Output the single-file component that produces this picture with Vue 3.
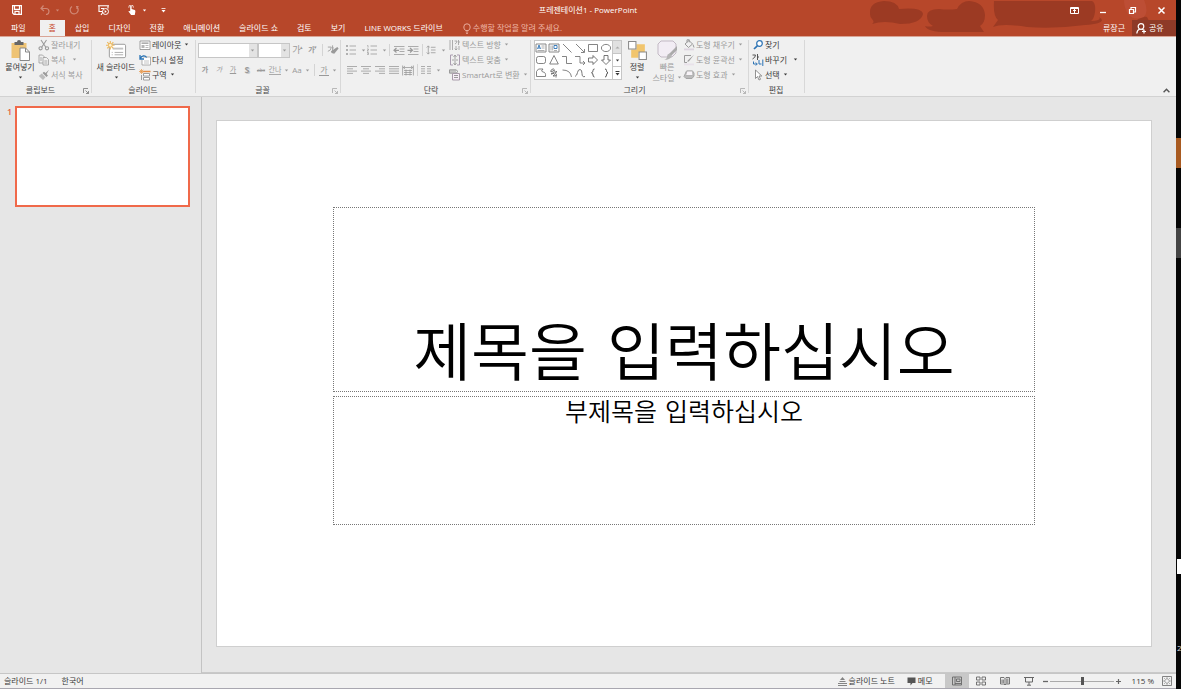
<script setup>
import { ref } from 'vue'

const zoom = ref(52)
const tabsAfterHome = ['삽입', '디자인', '전환', '애니메이션', '슬라이드 쇼', '검토', '보기', 'LINE WORKS 드라이브']
const clipboardItems = [
  { label: '잘라내기', icon: 'cut', off: true },
  { label: '복사', icon: 'copy', off: true, arrow: true, wide: true },
  { label: '서식 복사', icon: 'painter', off: true },
]
const slideItems = [
  { label: '레이아웃', icon: 'layout', arrow: true },
  { label: '다시 설정', icon: 'reset' },
  { label: '구역', icon: 'section', arrow: true },
]
const textItems = [
  { label: '텍스트 방향', icon: 'textdir' },
  { label: '텍스트 맞춤', icon: 'textalign' },
  { label: 'SmartArt로 변환', icon: 'smartart' },
]
const shapeItems = [
  { label: '도형 채우기', icon: 'fill' },
  { label: '도형 윤곽선', icon: 'outline' },
  { label: '도형 효과', icon: 'effect' },
]
const editItems = [
  { label: '찾기', icon: 'find' },
  { label: '바꾸기', icon: 'replace', arrow: true, wide: true },
  { label: '선택', icon: 'select', arrow: true },
]
const shapes = ['s-text', 's-vtext', 's-line', 's-arrow', 's-rect', 's-oval', 's-round', 's-tri', 's-elbow', 's-elbowarrow', 's-right', 's-down', 's-free', 's-scribble', 's-arc', 's-curve', 's-lbrace', 's-rbrace']
const views = [
  { icon: 'v-normal', label: '기본', on: true },
  { icon: 'v-sorter', label: '여러 슬라이드' },
  { icon: 'v-read', label: '읽기용 보기' },
  { icon: 'v-show', label: '슬라이드 쇼 시작' },
]
</script>

<template>
  <div class="desktop">
    <svg class="defs" aria-hidden="true">
      <symbol id="arr" viewBox="0 0 5 3"><path d="M.8.5h3.400L2.500 2.500z" fill="currentColor" /></symbol>
      <symbol id="launch" viewBox="0 0 6 6"><path d="M.5 5V.5H5M2.500 2.500l3 3M5.500 3v2.500H3" fill="none" stroke="currentColor" stroke-width=".8" /></symbol>
      <symbol id="cut" viewBox="0 0 12 12"><g fill="none" stroke="currentColor" stroke-width="1.100"><path d="M3 1l5 7.500M8.500 1L3.500 8.500" /><circle cx="2.600" cy="9.300" r="1.600" /><circle cx="9" cy="9.300" r="1.600" /></g></symbol>
      <symbol id="copy" viewBox="0 0 12 12"><g fill="#f0f0f0" stroke="currentColor" stroke-width=".8"><path d="M1 1h3.500L6.500 3v6H1z" /><path d="M5 3.500h3.500l2 2V11H5z" /><path d="M6.300 7h3M6.300 9h3M2 4h2M2 6h2" /></g></symbol>
      <symbol id="painter" viewBox="0 0 12 12"><path d="M11 .7L7.500 4 6 2.700 4.500 4l4 4L10 6.500 8.600 5z" fill="currentColor" /><path d="M3.800 4.500l3.700 3.700L5 11 .8 7z" fill="currentColor" opacity=".6" /></symbol>
      <symbol id="paste" viewBox="0 0 20 21"><path d="M1 3h15v15H1z" fill="#eec374" /><path d="M4 2h2.500a2 2 0 0 1 4 0H13v3H4z" fill="#666" /><path d="M9.500 8h5.500l4 4v8.500H9.500z" fill="#fff" stroke="#888" /><path d="M15 8v4h4" fill="none" stroke="#888" /></symbol>
      <symbol id="newslide" viewBox="0 0 22 20"><rect x="3.500" y="3.500" width="17" height="14" rx="1.500" fill="#fff" stroke="#999" /><path d="M7 7h11v2H7z" fill="#c4c4c4" /><path d="M6 12h1M9 12h9M6 14.500h1M9 14.500h9" stroke="#aaa" /><path d="M4.500 0v9M0 4.500h9M1.300 1.300l6.400 6.400M7.700 1.300L1.300 7.700" stroke="#edb95e" stroke-width="1.200" /><circle cx="4.500" cy="4.500" r="2" fill="#fff0cf" stroke="#edb95e" /></symbol>
      <symbol id="layout" viewBox="0 0 12 12"><path d="M1 2h10v8.500H1z" fill="#fff" stroke="#8a8a8a" stroke-width=".8" /><path d="M2.500 3.500h7v1.300h-7z" fill="#999" /><path d="M2.500 6h3v3h-3z" fill="#b5b5b5" /><path d="M6.500 6.500h3M6.500 8.500h3" stroke="#aaa" stroke-width=".8" /></symbol>
      <symbol id="reset" viewBox="0 0 12 12"><path d="M4 3h7.500v8H3V6" fill="#fff" stroke="#999" stroke-width=".8" /><path d="M5 7h5M5 9h5" stroke="#c4c4c4" /><path d="M1 1v4h4M1.300 4.500C2.500 1.500 6 .8 7.600 3.500" fill="none" stroke="#2672b5" stroke-width="1.300" /></symbol>
      <symbol id="section" viewBox="0 0 12 12"><path d="M4.500 4.500h6v2.500h-6zM4.500 8.500h6v2.500h-6z" fill="#fff" stroke="#888" stroke-width=".8" /><path d="M4 2.500h7.500" stroke="#e58c43" stroke-width="1.500" /><path d="M2.500 0v5M0 2.500h5M.8.8l3.400 3.400M4.200.8L.8 4.200" stroke="#e79a4f" stroke-width=".8" /><path d="M2.500 6v5" stroke="#888" stroke-width=".8" /></symbol>
      <symbol id="clearfmt" viewBox="0 0 14 12"><path d="M12 2l1.500 1.800-5 6-3.200-.8L4.600 7z" fill="currentColor" /><path d="M1 2h4q0 4-4 5M6.500 0v7M6.500 3H8" fill="none" stroke="currentColor" /></symbol>
      <symbol id="bullets" viewBox="0 0 10 10"><path d="M0 1h2M0 5h2M0 9h2" stroke="currentColor" stroke-width="1.600" /><path d="M3.500 1H10M3.500 5H10M3.500 9H10" stroke="currentColor" stroke-width=".8" /></symbol>
      <symbol id="numbers" viewBox="0 0 10 10"><path d="M.3.500H1v2M0 4h1.400v1L0 6h1.600M0 7.500h1.400v2.200H0M.5 8.600h.9" fill="none" stroke="currentColor" stroke-width=".7" /><path d="M3.500 1H10M3.500 5H10M3.500 9H10" stroke="currentColor" stroke-width=".8" /></symbol>
      <symbol id="outdent" viewBox="0 0 12 10"><path d="M1 1h10.500M6.500 3.500h5M6.500 6h5M1 9h10.500" stroke="currentColor" stroke-width=".8" /><path d="M6 4.800H1.500M3.500 2.500L1 4.800 3.500 7" fill="none" stroke="currentColor" stroke-width="1.200" /></symbol>
      <symbol id="indent" viewBox="0 0 12 10"><path d="M1 1h10.500M6.500 3.500h5M6.500 6h5M1 9h10.500" stroke="currentColor" stroke-width=".8" /><path d="M.5 4.800H5M3 2.500l2.500 2.300L3 7" fill="none" stroke="currentColor" stroke-width="1.200" /></symbol>
      <symbol id="spacing" viewBox="0 0 10 11"><path d="M2 1v9M.3 2.800L2 1l1.700 1.800M.3 8.200L2 10l1.700-1.800M5 2.500h5M5 5.500h5M5 8.500h5" fill="none" stroke="currentColor" stroke-width=".9" /></symbol>
      <symbol id="al" viewBox="0 0 10 8"><path d="M0 .5h10M0 2.800h6M0 5.100h10M0 7.400h6" stroke="currentColor" stroke-width=".8" /></symbol>
      <symbol id="ac" viewBox="0 0 10 8"><path d="M0 .5h10M2 2.800h6M0 5.100h10M2 7.400h6" stroke="currentColor" stroke-width=".8" /></symbol>
      <symbol id="ar" viewBox="0 0 10 8"><path d="M0 .5h10M4 2.800h6M0 5.100h10M4 7.400h6" stroke="currentColor" stroke-width=".8" /></symbol>
      <symbol id="aj" viewBox="0 0 10 8"><path d="M0 .5h10M0 2.800h10M0 5.100h10M0 7.400h10" stroke="currentColor" stroke-width=".8" /></symbol>
      <symbol id="ad" viewBox="0 0 12 10"><path d="M.6 0v10M11.400 0v10M1 2h10M3 .5L1.200 2 3 3.500M9 .5L10.800 2 9 3.500M2 5h8M2 7h8M2 9h8M4 4v6M8 4v6" fill="none" stroke="currentColor" stroke-width=".8" /></symbol>
      <symbol id="cols" viewBox="0 0 10 8"><path d="M0 .5h4M0 2.800h4M0 5.100h4M0 7.400h4M6 .5h4M6 2.800h4M6 5.100h4M6 7.400h4" stroke="currentColor" stroke-width=".8" /></symbol>
      <symbol id="textdir" viewBox="0 0 12 12"><path d="M1 1v10M3.500 1v10M5.500 2H8q0 2-2 3M9.500 1v5M9.500 3H11M7 7v4M10 7v4M5.700 9.500L7 11l1.300-1.500" fill="none" stroke="currentColor" stroke-width=".8" /></symbol>
      <symbol id="textalign" viewBox="0 0 12 12"><path d="M4 1H1.500v10H4M8 1h2.500v10H8" fill="none" stroke="#ab9db1" /><path d="M6 1v4M6 7v4M4.500 3L6 1l1.500 2M4.500 9L6 11l1.500-2M3 6h6" fill="none" stroke="currentColor" stroke-width=".9" /></symbol>
      <symbol id="smartart" viewBox="0 0 12 12"><path d="M.5.800h6.500l2 1.700-2 1.700H.5z" fill="none" stroke="currentColor" /><path d="M1 1h6v3H1z" fill="currentColor" opacity=".5" /><path d="M3.500 4.500h7v6.500h-7z" fill="#f7eef7" stroke="#a89ba9" /><path d="M5 6.500h4M5 8.500h4" stroke="currentColor" /></symbol>
      <symbol id="arrange" viewBox="0 0 20 20"><path d="M9 4h8v8H9zM4 9h7v8H4z" fill="#f1c56d" /><path d="M1.500 1.500h7v7h-7zM11.500 11.500h7v7h-7z" fill="#fff" stroke="#8a8a8a" /></symbol>
      <symbol id="quick" viewBox="0 0 21 21"><path d="M4 1h12l3 3v9l-4 4H4l-3-3V4z" fill="#f2edf4" stroke="#c2b9c4" /><path d="M20 6v4l-6 6-2-2z" fill="#aaa" /><path d="M12.500 13.500l2.500 2.500q-2 4-8 4 3-1 3-3.500 0-2.500 2.500-3z" fill="#b5b5b5" /></symbol>
      <symbol id="fill" viewBox="0 0 12 12"><path d="M2 5l4-3.500L9.500 5 5.500 8.500zM4 3.500V.8h2.300v2.500M10 5.500l1 3" fill="none" stroke="currentColor" /><path d="M1 9.500h10v1.800H1z" fill="#ddd4df" /></symbol>
      <symbol id="outline" viewBox="0 0 12 12"><path d="M8 1.500H1.500v7H4" fill="none" stroke="currentColor" /><path d="M11 .7L6 7.200l-1.500.8.2-1.600z" fill="currentColor" /><path d="M1 9.500h10v1.800H1z" fill="#e9e2ea" /></symbol>
      <symbol id="effect" viewBox="0 0 12 12"><path d="M3.500 2h6l1.500 2v3L9 9.500H3L1 7.500z" fill="#bbb" stroke="#a5a5a5" /><path d="M4 2h5.500L10 6.500H2.500z" fill="#f7f3f7" stroke="#b5b5b5" /></symbol>
      <symbol id="find" viewBox="0 0 12 12"><circle cx="7.500" cy="4.500" r="2.800" fill="#fff" stroke="#2c73b4" stroke-width="1.200" /><path d="M5.300 6.800L2 10" stroke="#2c73b4" stroke-width="1.700" /></symbol>
      <symbol id="replace" viewBox="0 0 12 12"><path d="M.5 1h3q0 2.500-3 4M5.500 0v6M5.500 3H7" fill="none" stroke="#555" /><path d="M7 6v4h2.500M10.800 5.500V12M1.500 7.500V10h3.500M3.800 8.500L5.300 10 3.800 11.500" fill="none" stroke="#2c73b4" /></symbol>
      <symbol id="select" viewBox="0 0 12 12"><path d="M3.500 1v8.500l2-2 1.500 3.500 1.500-.7L7 7h2.800z" fill="#fff" stroke="#777" stroke-width=".8" /></symbol>
      <symbol id="s-text" viewBox="0 0 12 12"><path d="M1 2h10v8H1z" fill="#fff" stroke="#888" /><path d="M2.500 7l1.500-4 1.500 4M3 6h2" fill="none" stroke="#2c73b4" stroke-width=".9" /><path d="M6.500 4h3M6.500 6h3M2.500 8.500h7" stroke="#999" stroke-width=".8" /></symbol>
      <symbol id="s-vtext" viewBox="0 0 12 12"><path d="M1 2h10v8H1z" fill="#fff" stroke="#888" /><path d="M6 3.500h3v3H6z" fill="none" stroke="#2c73b4" stroke-width=".9" /><path d="M3 3.500v5M4.700 3.500v5M6 8.500h3" stroke="#999" stroke-width=".8" /></symbol>
      <symbol id="s-line" viewBox="0 0 12 12"><path d="M2 2l8.500 8.500" stroke="#666" stroke-width=".8" /></symbol>
      <symbol id="s-arrow" viewBox="0 0 12 12"><path d="M2 2l8 8M10.500 7v3.500H7" fill="none" stroke="#666" stroke-width=".8" /></symbol>
      <symbol id="s-rect" viewBox="0 0 12 12"><path d="M1.500 2.500h9v7h-9z" fill="none" stroke="#666" stroke-width=".8" /></symbol>
      <symbol id="s-oval" viewBox="0 0 12 12"><ellipse cx="6" cy="6" rx="4.600" ry="3.600" fill="none" stroke="#666" stroke-width=".8" /></symbol>
      <symbol id="s-round" viewBox="0 0 12 12"><rect x="1.500" y="2.500" width="9" height="7" rx="2" fill="none" stroke="#666" stroke-width=".8" /></symbol>
      <symbol id="s-tri" viewBox="0 0 12 12"><path d="M6 1.500l4.300 8.500H1.700z" fill="none" stroke="#666" stroke-width=".8" /></symbol>
      <symbol id="s-elbow" viewBox="0 0 12 12"><path d="M1 2.500h4.500v7H11" fill="none" stroke="#666" stroke-width=".8" /></symbol>
      <symbol id="s-elbowarrow" viewBox="0 0 12 12"><path d="M1 2.500h5v6.500h4.500M9 7l2 2-2 2" fill="none" stroke="#666" stroke-width=".8" /></symbol>
      <symbol id="s-right" viewBox="0 0 12 12"><path d="M1.500 4h4.500V1.500L10.500 6 6 10.500V8H1.500z" fill="none" stroke="#555" stroke-width=".8" /></symbol>
      <symbol id="s-down" viewBox="0 0 12 12"><path d="M4 1.500h4V6h2.500L6 10.500 1.500 6H4z" fill="none" stroke="#555" stroke-width=".8" /></symbol>
      <symbol id="s-free" viewBox="0 0 12 12"><path d="M3.500 2H8q-3 2.500 0 3 3 0 2.500 4.500h-9V4.500z" fill="none" stroke="#666" stroke-width=".8" /></symbol>
      <symbol id="s-scribble" viewBox="0 0 12 12"><path d="M5.500 1.500q-4 2-2.500 3.500 3-1 3-2.500 2 2-3 4.500 4 0 5.500-3 0 3-3.500 5 3 .5 3.500-1.500-.5 2-.5 3" fill="none" stroke="#666" stroke-width=".9" /></symbol>
      <symbol id="s-arc" viewBox="0 0 12 12"><path d="M1.500 3q8 0 9 7" fill="none" stroke="#666" stroke-width=".8" /></symbol>
      <symbol id="s-curve" viewBox="0 0 12 12"><path d="M1 9.500q2-1 2.500-4t2.500-3 2 4 3 3" fill="none" stroke="#666" stroke-width=".9" /></symbol>
      <symbol id="s-lbrace" viewBox="0 0 12 12"><path d="M7.500 2Q6 2 6 3.500T4.500 6Q6 6 6 8t1.500 2" fill="none" stroke="#555" /></symbol>
      <symbol id="s-rbrace" viewBox="0 0 12 12"><path d="M5 2q1.500 0 1.500 1.500T8 6Q6.500 6 6.500 8T5 10" fill="none" stroke="#555" /></symbol>
      <symbol id="v-normal" viewBox="0 0 10 10"><path d="M.5 1h9v8h-9zM3 1v8M4.500 3h3.500v2.500H4.500zM3 7.500h6" fill="none" stroke="currentColor" stroke-width=".9" /></symbol>
      <symbol id="v-sorter" viewBox="0 0 10 10"><path d="M.5 1h3.500v3H.5zM6 1h3.500v3H6zM.5 6h3.500v3H.5zM6 6h3.500v3H6z" fill="none" stroke="currentColor" stroke-width=".9" /></symbol>
      <symbol id="v-read" viewBox="0 0 10 10"><path d="M.5 1.500H4L5 2.500 6 1.500h3.500V8H6L5 9 4 8H.5zM5 2.500V9M2 3.500v3.500M3.300 3.500v3.500" fill="none" stroke="currentColor" stroke-width=".9" /><path d="M6 2.500h2.500v5H6z" fill="currentColor" opacity=".6" /></symbol>
      <symbol id="v-show" viewBox="0 0 10 10"><path d="M0 1.500h10M1.500 2v4h7V2M5 6v3M3 9.200h4" fill="none" stroke="currentColor" /></symbol>
      <symbol id="fit" viewBox="0 0 10 10"><path d="M.5.500h9v9h-9z" fill="none" stroke="currentColor" stroke-width=".8" /><path d="M5 1.500v2M5 6.500v2M1.500 5h2M6.500 5h2M2.500 2.500l1 1M7.500 2.500l-1 1M2.500 7.500l1-1M7.500 7.500l-1-1" stroke="currentColor" stroke-width=".9" /></symbol>
    </svg>

    <div class="window">
      <header class="top">
        <svg class="texture" viewBox="0 0 320 36" aria-hidden="true">
          <g fill="#9c3a23">
            <path d="M14 14Q13 2 28 1q13 0 15 8 23-2 24 5-2 10-23 10-16-4-28 0 3-2 0-5-2-2-2-5z" />
            <path d="M71 16q0-7 12-7 10 1 18 0 4-8 12-8 15 1 16 14 0 8-5 11l4 6H90q-18 0-21-6 4 1 8 0-6-3-6-10z" />
            <path d="M138 1h98q4 2 3 11-1 7-4 9 11 0 8-4 10 6-14 8-30 4-58 2-25-4-34 0l5-7q-5-4-4-19z" />
            <path d="M281 20q5-5 10-3l3 6h-16z" />
          </g>
          <path d="M268 0h20q5 11 0 17-10 4-15-2-5-6-5-15z" fill="#bd4e35" />
        </svg>
        <div class="titlebar">
          <div class="quickbar">
            <button aria-label="저장"><svg class="i10" viewBox="0 0 10 10"><path d="M.6.600h8.800v8.800H2L.6 8zM2.500.800v3.500h5V.800M3 9V6.300h4V9" fill="none" stroke="currentColor" stroke-width="1.200" /></svg></button>
            <button class="dim q2" aria-label="실행 취소"><svg class="i10" viewBox="0 0 10 10"><path d="M3.500.5L1 3.500l3 2.500M1.500 3.500H6q3 0 3 3T6 9.500" fill="none" stroke="currentColor" stroke-width="1.200" /></svg><svg class="a"><use href="#arr" /></svg></button>
            <button class="dim" aria-label="다시 실행"><svg class="i10" viewBox="0 0 10 10"><path d="M7 1.500H9.500M8 1.500V4M8 2a4 4 0 1 1-5-.5" fill="none" stroke="currentColor" stroke-width="1.200" /></svg></button>
            <button class="q4" aria-label="처음부터 시작"><svg class="i12" viewBox="0 0 12 11"><path d="M0 .8h11M1 1v5.500h3.500M10 1v2.500M3 10l2-3" fill="none" stroke="currentColor" stroke-width="1.100" /><circle cx="7.500" cy="6.500" r="3" fill="none" stroke="currentColor" /><path d="M6.700 5v3l2-1.500zM3 3h3v1H3z" fill="currentColor" /></svg></button>
            <button class="q5" aria-label="터치/마우스 모드"><svg class="i10" viewBox="0 0 10 11"><path d="M3 5V1q.8-1 1.600 0v3.500L8 5.500q1 .5.700 2L8 11H4L1 7q.5-1 2 0z" fill="currentColor" /><path d="M1.500 3Q1 0 4 0t2.500 3" fill="none" stroke="currentColor" stroke-width=".8" /></svg><svg class="a"><use href="#arr" /></svg></button>
            <button aria-label="빠른 실행 도구 모음 사용자 지정"><svg class="a5" viewBox="0 0 5 5"><path d="M.5.500h4" stroke="currentColor" stroke-width=".8" /><path d="M.5 2h4L2.500 4.500z" fill="currentColor" /></svg></button>
          </div>
          <div class="doc">프레젠테이션1 - PowerPoint</div>
          <div class="winbtns">
            <button aria-label="리본 메뉴 표시 옵션"><svg class="i9" viewBox="0 0 9 9"><path d="M.5 1.500h8v6h-8z" fill="none" stroke="currentColor" /><path d="M1 2.500h7M4.500 3v4M3 5l1.500-1.500L6 5" fill="none" stroke="currentColor" /></svg></button>
            <button aria-label="최소화"><svg class="i9" viewBox="0 0 9 9"><path d="M1 6.500h6" stroke="currentColor" stroke-width="1.300" /></svg></button>
            <button aria-label="이전 크기로"><svg class="i9" viewBox="0 0 9 9"><path d="M1.500 3.500h4v4h-4zM3 3V1.500h4.500V6H6" fill="none" stroke="currentColor" stroke-width="1.200" /></svg></button>
            <button aria-label="닫기"><svg class="i9" viewBox="0 0 9 9"><path d="M1.500 1.500l6 6M7.500 1.500l-6 6" stroke="currentColor" stroke-width="1.500" /></svg></button>
          </div>
        </div>
        <nav class="tabs">
          <button class="tab file">파일</button>
          <button class="tab home">홈</button>
          <button v-for="t in tabsAfterHome" :key="t" class="tab">{{ t }}</button>
          <button class="tell"><svg class="bulb" viewBox="0 0 8 11"><path d="M2.500 7.500Q.8 6 .8 4A3.200 3.200 0 0 1 7.200 4q0 2-1.700 3.500zM2.800 9h2.400M3.200 10.500h1.600" fill="none" stroke="currentColor" stroke-width=".9" /></svg>수행할 작업을 알려 주세요.</button>
          <div class="account">
            <span class="user">류장근</span>
            <button class="share"><svg class="i11" viewBox="0 0 11 11"><circle cx="5" cy="3.500" r="2.800" fill="none" stroke="currentColor" stroke-width="1.200" /><path d="M.8 10.500Q1 7 3.800 6M6 6l1.500 1M8 6.500v4M6 8.500h4" fill="none" stroke="currentColor" stroke-width="1.200" /></svg>공유</button>
          </div>
        </nav>
      </header>

      <section class="ribbon">
        <div class="group g-clip">
          <div class="body">
            <button class="big b-paste"><svg class="bi"><use href="#paste" /></svg><span>붙여넣기</span><svg class="a"><use href="#arr" /></svg></button>
            <div class="list"><button v-for="i in clipboardItems" :key="i.label" class="item" :class="{ off: i.off, wide: i.wide }"><svg class="ic"><use :href="'#' + i.icon" /></svg>{{ i.label }}<svg v-if="i.arrow" class="a"><use href="#arr" /></svg></button></div>
          </div>
          <div class="caption"><span>클립보드</span><button class="launch" aria-label="클립보드 옵션"><svg><use href="#launch" /></svg></button></div>
        </div>

        <div class="group g-slides">
          <div class="body">
            <button class="big b-new"><svg class="bi"><use href="#newslide" /></svg><span>새 슬라이드</span><svg class="a"><use href="#arr" /></svg></button>
            <div class="list"><button v-for="i in slideItems" :key="i.label" class="item"><svg class="ic"><use :href="'#' + i.icon" /></svg>{{ i.label }}<svg v-if="i.arrow" class="a"><use href="#arr" /></svg></button></div>
          </div>
          <div class="caption"><span>슬라이드</span></div>
        </div>

        <div class="group g-font">
          <div class="body stack off">
            <div class="line">
              <div class="combo fontname"><select aria-label="글꼴"><option></option></select><svg class="a"><use href="#arr" /></svg></div>
              <div class="combo fontsize"><select aria-label="글꼴 크기"><option></option></select><svg class="a"><use href="#arr" /></svg></div>
              <button class="t w15" aria-label="글꼴 크기 크게"><b class="grow">가</b><sup>▴</sup></button>
              <button class="t w15" aria-label="글꼴 크기 작게"><b>가</b><sup>▾</sup></button>
              <i class="sep"></i>
              <button class="t w15" aria-label="서식 지우기"><svg class="clr"><use href="#clearfmt" /></svg></button>
            </div>
            <div class="line">
              <button class="t w14"><b>가</b></button>
              <button class="t w14"><em>가</em></button>
              <button class="t w14"><u>가</u></button>
              <button class="t w14"><b class="shadow">S</b></button>
              <button class="t w14"><s>abc</s></button>
              <button class="t w22"><span class="kern">간나</span><svg class="a"><use href="#arr" /></svg></button>
              <button class="t w22"><span class="aa">Aa</span><svg class="a"><use href="#arr" /></svg></button>
              <i class="sep"></i>
              <button class="t w22"><span class="color">가</span><svg class="a"><use href="#arr" /></svg></button>
            </div>
          </div>
          <div class="caption"><span>글꼴</span><button class="launch off" aria-label="글꼴 옵션"><svg><use href="#launch" /></svg></button></div>
        </div>

        <div class="group g-para">
          <div class="body">
            <div class="stack off">
              <div class="line">
                <button class="t w21" aria-label="글머리 기호"><svg class="i10"><use href="#bullets" /></svg><svg class="a"><use href="#arr" /></svg></button>
                <button class="t w21" aria-label="번호 매기기"><svg class="i10"><use href="#numbers" /></svg><svg class="a"><use href="#arr" /></svg></button>
                <i class="sep"></i>
                <button class="t w14" aria-label="목록 수준 줄임"><svg class="i12"><use href="#outdent" /></svg></button>
                <button class="t w14" aria-label="목록 수준 늘림"><svg class="i12"><use href="#indent" /></svg></button>
                <i class="sep"></i>
                <button class="t w21" aria-label="줄 간격"><svg class="i10"><use href="#spacing" /></svg><svg class="a"><use href="#arr" /></svg></button>
              </div>
              <div class="line">
                <button class="t w14" aria-label="왼쪽 맞춤"><svg class="i10"><use href="#al" /></svg></button>
                <button class="t w14" aria-label="가운데 맞춤"><svg class="i10"><use href="#ac" /></svg></button>
                <button class="t w14" aria-label="오른쪽 맞춤"><svg class="i10"><use href="#ar" /></svg></button>
                <button class="t w14" aria-label="양쪽 맞춤"><svg class="i10"><use href="#aj" /></svg></button>
                <button class="t w14" aria-label="균등 분할"><svg class="i12"><use href="#ad" /></svg></button>
                <i class="sep"></i>
                <button class="t w21" aria-label="단 추가"><svg class="i10"><use href="#cols" /></svg><svg class="a"><use href="#arr" /></svg></button>
              </div>
            </div>
            <div class="list"><button v-for="i in textItems" :key="i.label" class="item off"><svg class="ic"><use :href="'#' + i.icon" /></svg>{{ i.label }}<svg class="a"><use href="#arr" /></svg></button></div>
          </div>
          <div class="caption"><span>단락</span><button class="launch off" aria-label="단락 옵션"><svg><use href="#launch" /></svg></button></div>
        </div>

        <div class="group g-draw">
          <div class="body">
            <div class="gallery">
              <div class="shapes"><button v-for="s in shapes" :key="s" :aria-label="s"><svg class="ic"><use :href="'#' + s" /></svg></button></div>
              <div class="scroll">
                <button class="up" aria-label="위로"><svg class="a" viewBox="0 0 5 3"><path d="M.5 2.500h4L2.500.500z" fill="currentColor" /></svg></button>
                <button aria-label="아래로"><svg class="a"><use href="#arr" /></svg></button>
                <button aria-label="자세히"><svg class="a5" viewBox="0 0 5 5"><path d="M.5.500h4" stroke="currentColor" /><path d="M.5 2h4L2.500 4.500z" fill="currentColor" /></svg></button>
              </div>
            </div>
            <button class="big b-arr"><svg class="bi"><use href="#arrange" /></svg><span>정렬</span><svg class="a"><use href="#arr" /></svg></button>
            <button class="big b-quick off"><svg class="bi"><use href="#quick" /></svg><span>빠른</span><span class="two">스타일<svg class="a"><use href="#arr" /></svg></span></button>
            <div class="list"><button v-for="i in shapeItems" :key="i.label" class="item off"><svg class="ic"><use :href="'#' + i.icon" /></svg>{{ i.label }}<svg class="a"><use href="#arr" /></svg></button></div>
          </div>
          <div class="caption"><span>그리기</span><button class="launch off" aria-label="그리기 옵션"><svg><use href="#launch" /></svg></button></div>
        </div>

        <div class="group g-edit">
          <div class="body">
            <div class="list"><button v-for="i in editItems" :key="i.label" class="item" :class="{ wide: i.wide }"><svg class="ic"><use :href="'#' + i.icon" /></svg>{{ i.label }}<svg v-if="i.arrow" class="a"><use href="#arr" /></svg></button></div>
          </div>
          <div class="caption"><span>편집</span></div>
        </div>
        <button class="collapse" aria-label="리본 메뉴 축소"><svg viewBox="0 0 6 4"><path d="M.5 3.500L3 1l2.500 2.500" fill="none" stroke="currentColor" stroke-width="1.200" /></svg></button>
      </section>

      <main class="work">
        <aside class="thumbs"><span class="num">1</span><button class="thumb" aria-label="슬라이드 1"></button></aside>
        <div class="canvas">
          <article class="slide">
            <div class="holder title"><h1>제목을 입력하십시오</h1></div>
            <div class="holder sub"><p>부제목을 입력하십시오</p></div>
          </article>
        </div>
      </main>

      <footer class="status">
        <span>슬라이드 1/1</span><span class="lang">한국어</span>
        <div class="right">
          <button class="notes"><svg class="i9" viewBox="0 0 9 9"><path d="M4.500 0L7 3H2z" fill="currentColor" opacity=".6" /><path d="M1.500 4.500h6M0 6.500h9M0 8.500h9" stroke="currentColor" stroke-width=".6" /></svg>슬라이드 노트</button>
          <button class="memo"><svg class="i9" viewBox="0 0 9 9"><path d="M.5.500h8v5.500H5.500L3.500 8.500V6h-3z" fill="#555" /></svg>메모</button>
          <button v-for="v in views" :key="v.icon" class="view" :class="{ on: v.on }" :aria-label="v.label"><svg class="i10"><use :href="'#' + v.icon" /></svg></button>
          <button class="pm" aria-label="축소"><svg viewBox="0 0 5 5"><path d="M0 2.500h5" stroke="currentColor" stroke-width="1.300" /></svg></button>
          <input v-model="zoom" class="range" type="range" min="0" max="100" aria-label="확대/축소" />
          <button class="pm" aria-label="확대"><svg viewBox="0 0 5 5"><path d="M0 2.500h5M2.500 0v5" stroke="currentColor" stroke-width="1.200" /></svg></button>
          <span class="pct">115 %</span>
          <button class="fit" aria-label="창에 맞춤"><svg class="i10"><use href="#fit" /></svg></button>
        </div>
      </footer>
    </div>

    <div class="edge"><i class="orange"></i><i class="grey"></i><i class="white"></i><span>2</span></div>
  </div>
</template>

<style>
html, body, #app { height: 100%; }
body { margin: 0; overflow: hidden; }
</style>

<style scoped>
* { box-sizing: border-box; }
.desktop { display: flex; height: 100vh; background: #060606; color: #3a3a3a; font: 8px/12px "Open Sans", "Noto Sans CJK KR", sans-serif; white-space: nowrap; }
.defs { position: absolute; width: 0; height: 0; }
button { display: flex; align-items: center; margin: 0; padding: 0; border: 0; background: none; color: inherit; font: inherit; white-space: nowrap; }
svg { display: block; flex: none; }
.a { width: 5px; height: 3px; }
.a5 { width: 5px; height: 5px; }
.i9 { width: 9px; height: 9px; }
.i10 { width: 10px; height: 10px; }
.i11 { width: 11px; height: 11px; }
.i12 { width: 12px; height: 11px; }
.window { flex: 1; min-width: 0; display: flex; flex-direction: column; background: #e6e6e6; }

.top { position: relative; background: #b7472a; color: #fff; border-bottom: 1px solid #d9a596; }
.texture { position: absolute; right: 0; top: 0; width: 320px; height: 36px; }
.titlebar, .tabs { position: relative; display: flex; align-items: center; }
.titlebar { display: grid; grid-template-columns: 1fr auto 1fr; height: 20px; }
.quickbar { display: flex; padding-left: 12px; align-items: center; }
.quickbar button { gap: 5px; }
.dim { opacity: .35; }
.q2 { margin: 0 9px 0 18px; }
.q4 { margin: 0 17px 0 19px; }
.q5 { margin: 0 14px 0 0; gap: 2px; }
.winbtns { display: flex; justify-content: flex-end; gap: 20px; padding-right: 10px; }
.tabs { height: 16px; gap: 1px; }
.tab { height: 16px; padding: 0 9px; }
.file { padding-left: 11px; }
.home { margin-left: 4px; width: 25px; justify-content: center; background: #f0f0f0; color: #c8482a; }
.tell { gap: 2px; margin-left: 10px; color: #efb7a8; }
.bulb { width: 8px; height: 11px; }
.account { display: flex; margin-left: auto; align-items: center; gap: 7px; }
.share { height: 16px; width: 44px; padding-left: 4px; gap: 2px; background: #8e3a27; }

.ribbon { display: flex; height: 60px; background: #f0f0f0; border-bottom: 1px solid #d2d2d2; position: relative; }
.group { display: flex; flex-direction: column; position: relative; }
.group::after { content: ""; position: absolute; right: 0; top: 3px; bottom: 3px; width: 1px; background: #d8d8d8; }
.body { display: flex; height: 47px; }
.g-clip { width: 92px; padding-left: 3px; }
.g-slides { width: 104px; padding-left: 2px; }
.g-font { width: 145px; padding-left: 2px; }
.g-para { width: 190px; padding-left: 4px; }
.g-draw { width: 218px; padding-left: 3px; }
.g-edit { width: 56px; padding-left: 2px; }
.off { color: #9a9a9a; }
.caption { display: flex; justify-content: center; position: relative; height: 12px; color: #444; }
.caption span { padding-right: 14px; }
.g-slides .caption span, .g-edit .caption span { padding-right: 4px; }
.launch { position: absolute; right: 3px; top: 4px; color: #777; }
.launch.off { color: #aaa; }
.launch svg { width: 6px; height: 6px; }
.list { display: flex; flex-direction: column; margin-left: 1px; }
.item { height: 15px; gap: 1px; }
.item .a { margin-left: 2px; }
.item.wide .a { margin-left: 5px; }
.ic { width: 12px; height: 12px; }
.big { flex-direction: column; height: 45px; padding-top: 3px; }
.big .bi { width: 21px; height: 21px; }
.big span { line-height: 12px; }
.big > .a { margin-top: 3px; }
.b-paste { width: 34px; }
.b-new { width: 44px; }
.b-arr { width: 30px; }
.b-quick { width: 30px; }
.big .two { display: flex; align-items: center; gap: 2px; line-height: 9px; }

.stack { display: flex; flex-direction: column; padding-top: 3px; }
.line { display: flex; align-items: center; height: 20px; }
.combo { position: relative; width: 60px; height: 15px; border: 1px solid #c6c6c6; background: linear-gradient(to left, #e3e3e3 8px, #fff 8px); }
.fontsize { width: 32px; }
.combo select { display: block; appearance: none; width: 100%; height: 100%; border: 0; padding: 0; background: none; font: inherit; }
.combo .a { position: absolute; right: 2px; top: 5px; pointer-events: none; }
.t { flex: none; justify-content: center; gap: 2px; height: 14px; }
.t.w14 { width: 14px; }
.t.w15 { width: 15px; }
.t.w21 { width: 21px; gap: 5px; }
.t.w22 { width: 22px; gap: 3px; }
.t b, .t em, .t u { font-size: 7px; }
.t .grow, .t .shadow { font-size: 9px; }
.t .grow { font-weight: 400; }
.t sup { font-size: 5px; line-height: 6px; margin: -6px 0 0 -3px; }
.t .shadow { text-shadow: 1px 1px 0 #ccc; }
.t s { font-size: 5px; }
.t .kern { border-bottom: 1px solid #aaa; line-height: 9px; font-size: 7px; }
.t .color { border-bottom: 1px solid #999; line-height: 10px; padding: 0 1px; }
.clr { width: 12px; height: 11px; }
.sep { flex: none; width: 1px; height: 12px; margin: 0 2px; background: #d4d4d4; }
.g-para .stack { flex: none; width: 103px; }

.gallery { display: flex; margin-top: 3px; width: 88px; height: 40px; border: 1px solid #c6c6c6; background: #fff; }
.shapes { flex: 1; display: grid; grid-template-columns: repeat(6, 1fr); align-content: space-evenly; justify-items: center; }
.scroll { width: 9px; display: flex; flex-direction: column; border-left: 1px solid #c6c6c6; }
.scroll button { flex: 1; justify-content: center; border-top: 1px solid #c6c6c6; }
.scroll .up { border-top: 0; background: #e1e1e1; color: #aaa; }
.collapse { position: absolute; right: 6px; bottom: 3px; color: #555; }
.collapse svg { width: 7px; height: 5px; }

.work { flex: 1; min-height: 0; display: flex; }
.thumbs { width: 202px; border-right: 1px solid #c3c3c3; padding: 9px 11px 0 7px; display: flex; align-items: flex-start; }
.num { color: #e8603c; font-size: 9px; font-weight: 600; width: 8px; }
.thumb { flex: 1; aspect-ratio: 175 / 101; background: #fff; border: 2px solid #f0694a; }
.canvas { flex: 1; display: flex; padding: 23px 24px 25px 14px; border-bottom: 1px solid #c9c9c9; }
.slide { flex: 1; display: grid; grid-template-rows: 86fr 186fr 4fr 129fr 121fr; grid-template-columns: 116fr 703fr 116fr; background: #fff; border: 1px solid #cfcfcf; color: #000; }
.holder { grid-column: 2; border: 1px dotted #777; display: flex; justify-content: center; font-family: "DejaVu Sans", "Noto Sans CJK KR DemiLight", "Noto Sans CJK KR", sans-serif; }
.title { grid-row: 2; align-items: flex-end; }
.sub { grid-row: 4; align-items: flex-start; }
h1 { margin: 0; font-size: 63px; line-height: 74px; font-weight: 300; }
p { margin: 0; font-size: 25px; line-height: 32px; font-weight: 300; }

.status { display: flex; align-items: center; height: 16px; padding: 0 4px; background: #f1f1f1; border-top: 1px solid #c6c6c6; border-bottom: 1px solid #a9a7b0; }
.lang { margin-left: 14px; }
.right { margin-left: auto; display: flex; align-items: center; height: 100%; }
.right button { gap: 1px; color: #666; }
.right .notes, .right .memo { color: #3a3a3a; gap: 2px; margin-right: 12px; }
.view { width: 24px; height: 14px; justify-content: center; }
.view.on { background: #c8c8c8; }
.pm svg { width: 5px; height: 5px; }
.pm { margin: 0 2px; }
.range { appearance: none; width: 64px; height: 8px; margin: 0; background: linear-gradient(#aaa, #aaa) center / 100% 1px no-repeat; }
.range::-webkit-slider-thumb { appearance: none; width: 3px; height: 8px; background: #555; }
.pct { margin: 0 8px 0 9px; }

.edge { width: 5px; display: flex; flex-direction: column; align-items: flex-end; overflow: hidden; color: #ddd; background: #060606; }
.edge i { width: 5px; height: 30px; }
.orange { margin-top: 138px; background: #a85a20; }
.grey { margin-top: 60px; background: #444; }
.edge .white { width: 4px; height: 15px; margin-top: 301px; background: #fff; }
.edge span { margin-top: 68px; width: 4px; }
</style>
